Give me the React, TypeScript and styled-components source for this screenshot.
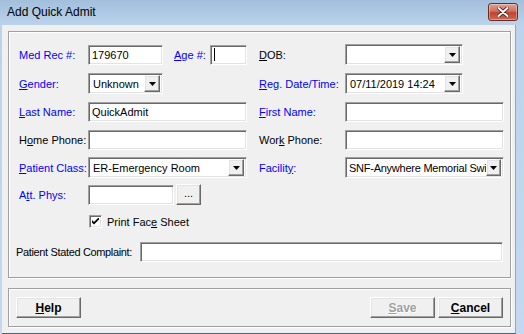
import React from "react";
import styled, { createGlobalStyle, css } from "styled-components";

const GlobalStyle = createGlobalStyle`
  html, body {
    margin: 0;
    padding: 0;
    background: #bcd3ea;
  }
  * {
    box-sizing: border-box;
  }
`;

const sunken = css`
  border: 1px solid;
  border-color: #a0a0a0 #ffffff #ffffff #a0a0a0;
  box-shadow: inset 1px 1px #696969, inset -1px -1px #e3e3e3;
`;

const raised = css`
  border: 1px solid;
  border-color: #ffffff #696969 #696969 #ffffff;
  box-shadow: inset -1px -1px #a0a0a0, inset 1px 1px #e3e3e3;
`;

const Window = styled.div`
  width: 524px;
  height: 334px;
  display: flex;
  flex-direction: column;
  background: linear-gradient(#a3bfdc, #bcd3eb 26px, #c4d9ef);
  font-family: "Liberation Sans", Arial, sans-serif;
  overflow: hidden;
`;

const TitleBar = styled.div`
  height: 25px;
  flex: none;
  display: flex;
  align-items: center;
  justify-content: space-between;
  padding: 0 6px 2px 7px;
`;

const Title = styled.span`
  font-size: 12px;
  color: #000;
`;

const CloseButton = styled.div`
  width: 30px;
  height: 18px;
  margin-top: 1px;
  border: 1px solid #6d2a22;
  border-radius: 3px;
  background: linear-gradient(#e0a293, #d0705c 45%, #c0432e 55%, #cc6a55);
  display: flex;
  align-items: center;
  justify-content: center;
  box-shadow: inset 0 0 0 1px rgba(255, 255, 255, 0.35);
`;

const Client = styled.div`
  flex: 1;
  margin: 0 8px 0 2px;
  background: #f0f0f0;
  border-right: 1px solid #8fa9c4;
  border-bottom: 1px solid #3b6a8e;
  display: flex;
  flex-direction: column;
  padding: 6px 4px 4px 6px;
`;

const GroupBox = styled.div`
  border: 1px solid #a0a0a0;
  box-shadow: inset 1px 1px #fff, 1px 1px #fff;
  padding: 12px 7px 0 10px;
  height: 247px;
  display: flex;
  flex-direction: column;
`;

const ButtonBox = styled.div`
  margin-top: 10px;
  height: 39px;
  border: 1px solid #a0a0a0;
  box-shadow: inset 1px 1px #fff, 1px 1px #fff;
  display: flex;
  align-items: center;
  padding: 0 7px 0 7px;
  gap: 3px;
`;

const Row = styled.div<{ $top: number }>`
  display: grid;
  grid-template-columns: 69px 159px 12px 86px 159px;
  align-items: center;
  margin-top: ${(p) => p.$top}px;
`;

const Label = styled.span<{ $blue?: boolean }>`
  font-size: 11px;
  color: ${(p) => (p.$blue ? "#0000ff" : "#000")};
  white-space: nowrap;
`;

const Field = styled.div<{ $w?: number }>`
  ${sunken};
  height: 20px;
  width: ${(p) => (p.$w ? `${p.$w}px` : "100%")};
  background: #fff;
  font-size: 11px;
  color: #000;
  padding: 0 3px;
  display: flex;
  align-items: center;
  white-space: nowrap;
  overflow: hidden;
`;

const Combo = styled.div<{ $w?: number; $tight?: boolean }>`
  ${sunken};
  height: 21px;
  width: ${(p) => (p.$w ? `${p.$w}px` : "100%")};
  background: #fff;
  font-size: 11px;
  color: #000;
  padding: ${(p) => (p.$tight ? "2px 2px 2px 3px" : "2px 2px 2px 4px")};
  letter-spacing: ${(p) => (p.$tight ? "-0.25px" : "normal")};
  display: flex;
  align-items: center;
  white-space: nowrap;
`;

const ComboText = styled.span`
  flex: 1;
  overflow: hidden;
`;

const DropButton = styled.div<{ $tight?: boolean }>`
  ${raised};
  width: ${(p) => (p.$tight ? 15 : 16)}px;
  height: 17px;
  flex: none;
  background: #f0f0f0;
  display: flex;
  align-items: center;
  justify-content: center;
`;

const Inline = styled.div`
  display: flex;
  align-items: center;
`;

const Caret = styled.span`
  width: 1px;
  height: 13px;
  background: #000;
`;

const BrowseButton = styled.div`
  ${raised};
  width: 25px;
  height: 21px;
  margin-left: 2px;
  background: #f0f0f0;
  font-size: 11px;
  display: flex;
  align-items: center;
  justify-content: center;
  padding-bottom: 3px;
`;

const CheckRow = styled.div`
  display: flex;
  align-items: center;
  margin: 10px 0 0 70px;
  gap: 5px;
`;

const CheckBox = styled.div`
  ${sunken};
  width: 13px;
  height: 13px;
  background: #fff;
  display: flex;
  align-items: center;
  justify-content: center;
`;

const ComplaintRow = styled.div`
  display: grid;
  grid-template-columns: 124px 1fr;
  align-items: center;
  margin: 14px 0 0 -3px;
`;

const ComplaintLabel = styled(Label)`
  letter-spacing: -0.35px;
`;

const Button = styled.div<{ $disabled?: boolean }>`
  ${raised};
  width: 65px;
  height: 21px;
  background: #f0f0f0;
  font-size: 12px;
  font-weight: bold;
  color: ${(p) => (p.$disabled ? "#a0a0a0" : "#000")};
  text-shadow: ${(p) => (p.$disabled ? "1px 1px #fff" : "none")};
  display: flex;
  align-items: center;
  justify-content: center;
`;

const Spacer = styled.div`
  flex: 1;
`;

const Arrow = () => (
  <svg width="7" height="4" viewBox="0 0 7 4">
    <polygon points="0,0 7,0 3.5,4" fill="#000" />
  </svg>
);

const DropDown: React.FC<{ value?: string; w?: number; tight?: boolean }> = ({
  value,
  w,
  tight,
}) => (
  <Combo $w={w} $tight={tight}>
    <ComboText>{value}</ComboText>
    <DropButton $tight={tight}>
      <Arrow />
    </DropButton>
  </Combo>
);

const App: React.FC = () => {
  return (
    <Window>
      <GlobalStyle />
      <TitleBar>
        <Title>Add Quick Admit</Title>
        <CloseButton>
          <svg width="12" height="10" viewBox="0 0 12 10">
            <path
              d="M1.5 1 L10.5 9 M10.5 1 L1.5 9"
              stroke="#4a1a14"
              strokeWidth="3.6"
              strokeLinecap="round"
            />
            <path
              d="M1.5 1 L10.5 9 M10.5 1 L1.5 9"
              stroke="#fff"
              strokeWidth="2"
              strokeLinecap="round"
            />
          </svg>
        </CloseButton>
      </TitleBar>
      <Client>
        <GroupBox>
          <Row $top={0}>
            <Label $blue>Med Rec #:</Label>
            <Inline>
              <Field $w={75}>179670</Field>
              <Label $blue style={{ marginLeft: 11 }}>
                <u>A</u>ge #:
              </Label>
              <Field $w={37} style={{ marginLeft: "auto" }}>
                <Caret />
              </Field>
            </Inline>
            <span />
            <Label>
              <u>D</u>OB:
            </Label>
            <DropDown w={118} />
          </Row>
          <Row $top={8}>
            <Label $blue>
              <u>G</u>ender:
            </Label>
            <DropDown value="Unknown" w={75} />
            <span />
            <Label $blue>
              <u>R</u>eg. Date/Time:
            </Label>
            <DropDown value="07/11/2019 14:24" w={118} />
          </Row>
          <Row $top={8}>
            <Label $blue>
              <u>L</u>ast Name:
            </Label>
            <Field>QuickAdmit</Field>
            <span />
            <Label $blue>
              <u>F</u>irst Name:
            </Label>
            <Field />
          </Row>
          <Row $top={8}>
            <Label>
              H<u>o</u>me Phone:
            </Label>
            <Field />
            <span />
            <Label>
              Wor<u>k</u> Phone:
            </Label>
            <Field />
          </Row>
          <Row $top={7}>
            <Label $blue>
              <u>P</u>atient Class:
            </Label>
            <DropDown value="ER-Emergency Room" />
            <span />
            <Label $blue>
              Facilit<u>y</u>:
            </Label>
            <DropDown value="SNF-Anywhere Memorial Swi" tight />
          </Row>
          <Row $top={6}>
            <Label $blue>
              A<u>t</u>t. Phys:
            </Label>
            <Inline>
              <Field $w={86} />
              <BrowseButton>...</BrowseButton>
            </Inline>
          </Row>
          <CheckRow>
            <CheckBox>
              <svg width="7" height="7" viewBox="0 0 7 7">
                <path d="M0 2 L0 4.5 L2 6.5 L7 1.5 L7 -1 L2 4 Z" fill="#000" />
              </svg>
            </CheckBox>
            <Label>
              Print Fac<u>e</u> Sheet
            </Label>
          </CheckRow>
          <ComplaintRow>
            <ComplaintLabel>Patient Stated Complaint:</ComplaintLabel>
            <Field />
          </ComplaintRow>
        </GroupBox>
        <ButtonBox>
          <Button>
            <span>
              <u>H</u>elp
            </span>
          </Button>
          <Spacer />
          <Button $disabled>
            <span>
              <u>S</u>ave
            </span>
          </Button>
          <Button>
            <span>
              <u>C</u>ancel
            </span>
          </Button>
        </ButtonBox>
      </Client>
    </Window>
  );
};

export default App;
